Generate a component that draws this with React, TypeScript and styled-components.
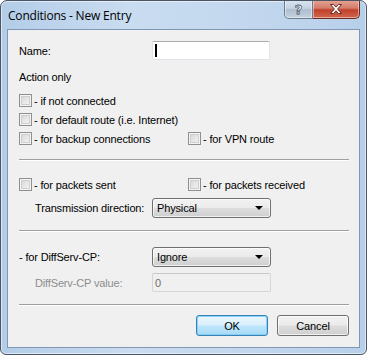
import React from 'react'
import styled, { createGlobalStyle } from 'styled-components'

const Global = createGlobalStyle`
  html, body { margin: 0; padding: 0; background: #ffffff; }
  * { box-sizing: border-box; }
`

const Window = styled.div`
  width: 367px;
  height: 355px;
  border: 1px solid #4b5563;
  border-radius: 7px 7px 6px 6px;
  background: linear-gradient(to right, #b3cde8 0%, #c9dcf0 35%, #c2d7ee 70%, #b7d0ea 100%);
  box-shadow: inset 0 0 0 1px rgba(255, 255, 255, 0.55);
  display: flex;
  flex-direction: column;
  overflow: hidden;
  font-family: "Liberation Sans", Arial, sans-serif;
  font-size: 11px;
  letter-spacing: -0.15px;
  color: #000;
`

const TitleBar = styled.div`
  height: 28px;
  display: flex;
  align-items: flex-start;
  padding-right: 6px;
`

const Title = styled.div`
  flex: 1;
  padding: 6px 0 0 7px;
  font-family: "Open Sans", "Noto Sans", sans-serif;
  font-size: 12px;
  letter-spacing: -0.2px;
  color: #000;
`

const CaptionButton = styled.div<{ $close?: boolean }>`
  width: ${p => (p.$close ? 47 : 29)}px;
  height: 19px;
  margin-top: -1px;
  border: 1px solid ${p => (p.$close ? '#6e2a22' : '#6d7b8c')};
  border-top: none;
  border-radius: ${p => (p.$close ? '0 0 5px 0' : '0 0 0 5px')};
  ${p => (p.$close ? 'border-left: none;' : '')}
  background: ${p =>
    p.$close
      ? 'linear-gradient(#e6a597 0%, #d47c6a 45%, #c0412c 55%, #d1674c 100%)'
      : 'linear-gradient(#dbe5f1 0%, #c6d3e2 45%, #aebdd0 55%, #c4d2e2 100%)'};
  box-shadow: inset 0 0 0 1px rgba(255, 255, 255, 0.45);
  display: flex;
  align-items: center;
  justify-content: center;
`

const HelpGlyph = styled.span`
  font-family: "DejaVu Sans", sans-serif;
  font-weight: bold;
  font-size: 13px;
  line-height: 1;
  color: #ffffff;
  -webkit-text-stroke: 0.8px #4d5a6a;
`

const Client = styled.div`
  flex: 1;
  margin: 0 6px 6px 6px;
  border: 1px solid #8196b2;
  background: #f0f0f0;
  padding: 11px 10px 0 11px;
  display: flex;
  flex-direction: column;
`

const FormRow = styled.div<{ $h: number; $mt: number; $indent?: boolean }>`
  display: grid;
  grid-template-columns: ${p => (p.$indent ? '16px 117px' : '133px')} 1fr;
  align-items: center;
  height: ${p => p.$h}px;
  margin-top: ${p => p.$mt}px;
`

const Label = styled.span<{ $disabled?: boolean }>`
  color: ${p => (p.$disabled ? '#8d8d8d' : '#000')};
  white-space: nowrap;
`

const Spacer = styled.span``

const TextBox = styled.div<{ $disabled?: boolean; $w: number }>`
  width: ${p => p.$w}px;
  height: 100%;
  background: ${p => (p.$disabled ? '#f0f0f0' : '#ffffff')};
  border: 1px solid ${p => (p.$disabled ? '#d5d5d5' : '#e2e3ea')};
  border-top-color: ${p => (p.$disabled ? '#c8c8c8' : '#abadb3')};
  border-radius: 2px;
  display: flex;
  align-items: center;
  padding-left: 2px;
  color: #6d6d6d;
`

const Caret = styled.span`
  width: 2px;
  height: 13px;
  background: #000;
`

const Section = styled.div<{ $mt: number }>`
  margin-top: ${p => p.$mt}px;
  height: 14px;
  display: flex;
  align-items: center;
`

const CheckGrid = styled.div<{ $mt: number }>`
  display: grid;
  grid-template-columns: 169px 1fr;
  grid-auto-rows: 19px;
  margin-top: ${p => p.$mt}px;
`

const CheckItem = styled.label<{ $wide?: boolean }>`
  display: flex;
  align-items: center;
  gap: 2px;
  white-space: nowrap;
  ${p => (p.$wide ? 'grid-column: 1 / span 2;' : '')}
`

const Box = styled.span`
  width: 13px;
  height: 13px;
  border: 1px solid #8e8f8f;
  background: linear-gradient(135deg, #d2d2d2 0%, #e6e6e6 50%, #f8f8f8 100%);
  box-shadow: inset 0 0 0 1px #f4f4f4, inset 0 0 0 2px #cfcfcf;
  flex-shrink: 0;
`

const Separator = styled.div<{ $mt: number }>`
  margin-top: ${p => p.$mt}px;
  height: 2px;
  border-top: 1px solid #a0a0a0;
  border-bottom: 1px solid #ffffff;
`

const Combo = styled.div`
  width: 119px;
  height: 100%;
  border: 1px solid #707070;
  border-radius: 3px;
  background: linear-gradient(#f2f2f2 0%, #ebebeb 48%, #dddddd 52%, #cfcfcf 100%);
  box-shadow: inset 0 0 0 1px rgba(255, 255, 255, 0.7);
  display: flex;
  align-items: center;
  justify-content: space-between;
  padding: 0 7px 0 4px;
`

const Arrow = styled.span`
  width: 0;
  height: 0;
  border-left: 4px solid transparent;
  border-right: 4px solid transparent;
  border-top: 4px solid #000;
`

const ButtonRow = styled.div`
  margin-top: 9px;
  display: flex;
  justify-content: flex-end;
  gap: 9px;
`

const Button = styled.div<{ $default?: boolean }>`
  width: 72px;
  height: 21px;
  border: 1px solid ${p => (p.$default ? '#3c7fb1' : '#707070')};
  border-radius: 3px;
  background: ${p =>
    p.$default
      ? 'linear-gradient(#eaf6fd 0%, #d9f0fc 48%, #bee6fd 52%, #a7d9f5 100%)'
      : 'linear-gradient(#f2f2f2 0%, #ebebeb 48%, #dddddd 52%, #cfcfcf 100%)'};
  box-shadow: inset 0 0 0 1px ${p => (p.$default ? 'rgba(120, 210, 250, 0.9)' : 'rgba(255,255,255,0.7)')};
  display: flex;
  align-items: center;
  justify-content: center;
`

const checks = [
  { label: '- if not connected', wide: true },
  { label: '- for default route (i.e. Internet)', wide: true },
  { label: '- for backup connections' },
  { label: '- for VPN route' },
]

export default function App() {
  return (
    <>
      <Global />
      <Window>
        <TitleBar>
          <Title>Conditions - New Entry</Title>
          <CaptionButton>
            <HelpGlyph>?</HelpGlyph>
          </CaptionButton>
          <CaptionButton $close>
            <svg width="14" height="12" viewBox="0 0 14 12">
              <path
                d="M1.5 1.5 L4.5 1.5 L7 4.2 L9.5 1.5 L12.5 1.5 L8.6 6 L12.5 10.5 L9.5 10.5 L7 7.8 L4.5 10.5 L1.5 10.5 L5.4 6 Z"
                fill="#ffffff"
                stroke="#5a1f18"
                strokeWidth="0.9"
                strokeLinejoin="round"
              />
            </svg>
          </CaptionButton>
        </TitleBar>
        <Client>
          <FormRow $h={19} $mt={0}>
            <Label>Name:</Label>
            <TextBox $w={118}>
              <Caret />
            </TextBox>
          </FormRow>
          <Section $mt={10}>Action only</Section>
          <CheckGrid $mt={7}>
            {checks.map(c => (
              <CheckItem key={c.label} $wide={c.wide}>
                <Box />
                {c.label}
              </CheckItem>
            ))}
          </CheckGrid>
          <Separator $mt={11} />
          <CheckGrid $mt={14}>
            <CheckItem>
              <Box />- for packets sent
            </CheckItem>
            <CheckItem>
              <Box />- for packets received
            </CheckItem>
          </CheckGrid>
          <FormRow $h={20} $mt={4} $indent>
            <Spacer />
            <Label>Transmission direction:</Label>
            <Combo>
              Physical
              <Arrow />
            </Combo>
          </FormRow>
          <Separator $mt={12} />
          <FormRow $h={20} $mt={15}>
            <Label>- for DiffServ-CP:</Label>
            <Combo>
              Ignore
              <Arrow />
            </Combo>
          </FormRow>
          <FormRow $h={19} $mt={6} $indent>
            <Spacer />
            <Label $disabled>DiffServ-CP value:</Label>
            <TextBox $w={119} $disabled>
              0
            </TextBox>
          </FormRow>
          <Separator $mt={12} />
          <ButtonRow>
            <Button $default>OK</Button>
            <Button>Cancel</Button>
          </ButtonRow>
        </Client>
      </Window>
    </>
  )
}
